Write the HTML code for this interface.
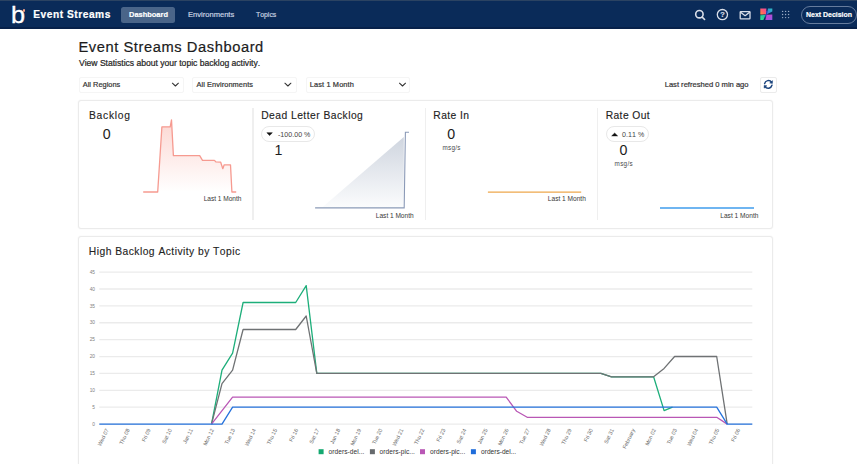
<!DOCTYPE html>
<html lang="en">
<head>
<meta charset="utf-8">
<title>Event Streams Dashboard</title>
<style>
*{box-sizing:border-box;margin:0;padding:0}
html,body{width:857px;height:464px;overflow:hidden;background:#fff}
body{position:relative;font-family:"Liberation Sans", sans-serif;color:#222}
.t{position:absolute;line-height:1;white-space:nowrap;font-kerning:none;font-weight:400;display:block;transform-origin:0 0;-webkit-text-stroke:0.2px currentColor}
.nav{position:absolute;left:0;top:0;width:857px;height:28.7px;background:#0a2b59;border-top:1px solid #2b4362;border-bottom:2px solid #07214a}
.thin{-webkit-text-stroke:0}
.hd{-webkit-text-stroke:0.12px currentColor}
.bd{-webkit-text-stroke:0.22px currentColor}
.logo{-webkit-text-stroke:0.35px #fff}
.pill-nav{position:absolute;left:121px;top:7px;width:54px;height:16px;border-radius:2.5px;background:#4a6589}
.btn-nd{position:absolute;left:800.5px;top:6px;width:56px;height:18px;border-radius:9px;border:1px solid #667c9d}
.dot{position:absolute;left:22.5px;top:9.2px;width:2.7px;height:2.7px;border-radius:50%;background:#f5a58a}
.sel{position:absolute;top:77px;height:16px;width:105px;border:1px solid #f5f5f5;border-radius:2px;background:#fff}
.card{position:absolute;left:78px;width:695.1px;border:1px solid #ebebeb;border-radius:3px;background:#fff;box-shadow:0 0 1.5px rgba(0,0,0,.07)}
.div{position:absolute;top:108px;width:1.3px;height:112.3px;background:#efefef}
.chip{position:absolute;top:126.1px;height:16.1px;border:1px solid #e8e8e8;border-radius:8px;background:#fff}
.rbtn{position:absolute;left:759.5px;top:76.6px;width:17px;height:16.2px;border:1px solid #ebebeb;border-radius:2px;background:#fff}
svg{position:absolute;left:0;top:0;overflow:visible}
.grid{stroke:#ebebeb;stroke-width:1.3}
.yl{font-size:4.8px;fill:#808080;text-anchor:end;font-family:"Liberation Sans", sans-serif}
.xl{font-size:5.4px;fill:#666;text-anchor:end;font-family:"Liberation Sans", sans-serif}
.ln{fill:none;stroke-width:1.3;stroke-linejoin:round}
</style>
</head>
<body>
<header>
<div class="nav"></div>
<nav>
<div class="pill-nav"></div>
<div class="btn-nd"></div>
<span class="t logo" style="left:10.77px;top:3px;font-size:24.5px;transform:scaleX(1.03);color:#fff;">b</span>
<span class="t" style="left:33.22px;top:10px;font-size:10.2px;letter-spacing:0.528px;font-weight:700;color:#fff;">Event Streams</span>
<span class="t" style="left:128.70px;top:11px;font-size:8.1px;transform:scaleX(0.9216);font-weight:700;color:#fff;">Dashboard</span>
<span class="t" style="left:187.98px;top:11px;font-size:8.1px;transform:scaleX(0.9348);color:#c9d3e2;">Environments</span>
<span class="t" style="left:256.45px;top:11px;font-size:8.1px;transform:scaleX(0.8511);color:#c9d3e2;">Topics</span>
<span class="t" style="left:805.53px;top:11px;font-size:8.1px;transform:scaleX(0.8606);font-weight:700;color:#fff;">Next Decision</span>
<i class="dot"></i>
<svg width="857" height="28" viewBox="0 0 857 28" aria-hidden="true">
 <g fill="none" stroke="#d9dee8" stroke-width="1.3" stroke-linecap="round" stroke-linejoin="round">
  <circle cx="699.4" cy="14.2" r="3.7" stroke-width="1.6"/><path d="M702.2 17.1 L704.6 19.5" stroke-width="1.6"/>
  <circle cx="722.4" cy="14.6" r="5.1"/>
  <rect x="740.2" y="11.6" width="9.8" height="7.2" rx="0.6"/><path d="M740.6 12.2 L745.1 15.7 L749.6 12.2"/>
 </g>
 <g fill="#9aabc6">
  <circle cx="782.6" cy="11.4" r="0.72"/><circle cx="785.6" cy="11.4" r="0.72"/><circle cx="788.6" cy="11.4" r="0.72"/>
  <circle cx="782.6" cy="14.5" r="0.72"/><circle cx="785.6" cy="14.5" r="0.72"/><circle cx="788.6" cy="14.5" r="0.72"/>
  <circle cx="782.6" cy="17.6" r="0.72"/><circle cx="785.6" cy="17.6" r="0.72"/><circle cx="788.6" cy="17.6" r="0.72"/>
 </g>
 <defs>
  <linearGradient id="i1" x1="1" y1="0" x2="0" y2="1"><stop offset="0" stop-color="#f0469c"/><stop offset=".55" stop-color="#ff5f6b"/><stop offset="1" stop-color="#ff9440"/></linearGradient>
  <linearGradient id="i2" x1="0" y1="1" x2="1" y2="0"><stop offset="0" stop-color="#3b6fe0"/><stop offset="1" stop-color="#2bc0c2"/></linearGradient>
  <linearGradient id="i3" x1="0" y1="1" x2="1" y2="0"><stop offset="0" stop-color="#36e48c"/><stop offset="1" stop-color="#22b9a8"/></linearGradient>
  <linearGradient id="i4" x1="0" y1="0" x2="1" y2="1"><stop offset="0" stop-color="#dc42c0"/><stop offset="1" stop-color="#8e58ea"/></linearGradient>
 </defs>
 <g>
  <path d="M765.4 11 L767.6 11 L767.3 17.6 L765.2 17.6Z" fill="#2a35b4"/>
  <path d="M760.3 8.6 L766.4 8.6 L766 14.3 L760.3 14.6Z" fill="url(#i1)"/>
  <path d="M768 8.6 L772.3 8.6 L772.3 11.6 L766.9 14.2Z" fill="url(#i2)"/>
  <path d="M760.3 15.2 L765.7 14.8 L763.4 20.1 L760.3 20.1Z" fill="url(#i3)"/>
  <path d="M766.7 14.8 L772.3 14.4 L772.3 20.1 L765.3 20.1Z" fill="url(#i4)"/>
 </g>
</svg>
<span class="t" style="left:720.3px;top:10.9px;font-size:7.4px;font-weight:700;color:#d9dee8">?</span>
</nav>
</header>
<main>

<h1 class="t" style="left:78.39px;top:40px;font-size:14.7px;letter-spacing:0.575px;color:#1c1c1c;">Event Streams Dashboard</h1>
<p class="t bd" style="left:78.96px;top:59px;font-size:8.6px;letter-spacing:-0.018px;color:#262626;">View Statistics about your topic backlog activity.</p>

<div class="filters">
<div class="sel" style="left:79.3px"></div>
<div class="sel" style="left:192px"></div>
<div class="sel" style="left:305.8px;width:104px"></div>
<div class="rbtn"></div>
<span class="t" style="left:82.79px;top:81px;font-size:7.4px;letter-spacing:0.005px;color:#333;">All Regions</span>
<span class="t" style="left:196.49px;top:81px;font-size:7.4px;letter-spacing:0.071px;color:#333;">All Environments</span>
<span class="t" style="left:309.69px;top:81px;font-size:7.4px;letter-spacing:0.137px;color:#333;">Last 1 Month</span>
<span class="t" style="left:664.68px;top:81px;font-size:7.6px;letter-spacing:-0.006px;color:#333;">Last refreshed 0 min ago</span>
<svg width="857" height="100" viewBox="0 0 857 100" aria-hidden="true">
 <g fill="none" stroke="#333" stroke-width="1.05" stroke-linecap="round" stroke-linejoin="round">
  <path d="M172.4 83.2 L175.4 86 L178.4 83.2"/>
  <path d="M284.9 83.2 L287.9 86 L290.9 83.2"/>
  <path d="M399.5 83.2 L402.5 86 L405.5 83.2"/>
 </g>
 <g fill="none" stroke="#1a437d" stroke-width="1.5" stroke-linecap="round">
  <path d="M764.6 83.6 A3.9 3.9 0 0 1 771.6 82.2"/>
  <path d="M772 85.2 A3.9 3.9 0 0 1 765 86.6"/>
 </g>
 <path d="M772.6 80.6 L772.4 83.6 L769.6 83Z" fill="#1a437d" stroke="#1a437d" stroke-width="0.4" stroke-linejoin="round"/>
 <path d="M764 88.2 L764.2 85.2 L767 85.8Z" fill="#1a437d" stroke="#1a437d" stroke-width="0.4" stroke-linejoin="round"/>
</svg>

</div>
<section>
<div class="card" style="top:100px;height:129.2px"></div>
<div class="div" style="left:252.4px"></div>
<div class="div" style="left:425px"></div>
<div class="div" style="left:597.2px"></div>
<div class="chip" style="left:261px;width:54.2px"></div>
<div class="chip" style="left:606.1px;width:42.8px"></div>
<svg width="857" height="230" viewBox="0 0 857 230" aria-hidden="true">
 <defs>
  <linearGradient id="g1" x1="0" y1="0" x2="0" y2="1"><stop offset="0" stop-color="#fcd7d2"/><stop offset="1" stop-color="#fff"/></linearGradient>
  <linearGradient id="g2" x1="0" y1="0" x2="0" y2="1"><stop offset="0" stop-color="#cfd5df"/><stop offset="1" stop-color="#fbfcfd"/></linearGradient>
 </defs>
 <path d="M143.2,192.0 L157.7,192.0 L161.9,126.8 L170.2,126.8 L171.5,119.9 L173.4,155.6 L199.7,155.6 L202.5,160.3 L214.4,160.4 L215.8,161.8 L220.7,162.2 L222.8,168.7 L224.2,164.8 L230.5,164.8 L231.9,192.0 L236.2,192.0 Z" fill="url(#g1)"/>
 <path d="M143.2,192.0 L157.7,192.0 L161.9,126.8 L170.2,126.8 L171.5,119.9 L173.4,155.6 L199.7,155.6 L202.5,160.3 L214.4,160.4 L215.8,161.8 L220.7,162.2 L222.8,168.7 L224.2,164.8 L230.5,164.8 L231.9,192.0 L236.2,192.0" fill="none" stroke="#f69a90" stroke-width="1.3" stroke-linejoin="round"/>
 <path d="M321.5,207.9 L403.8,207.9 L403.8,137 Z" fill="url(#g2)"/>
 <path d="M315.1,207.9 L404.2,207.9 L405.4,132.2 L409.0,132.2" fill="none" stroke="#8b9ab7" stroke-width="1.1"/>
 <path d="M487.9,192.1 L581.2,192.1" stroke="#eea74c" stroke-width="1.3"/>
 <path d="M660,208 L754,208" stroke="#3f9dec" stroke-width="1.3"/>
 <path d="M266.9 132.7 L272.3 132.7 L269.6 135.6Z" fill="#111" stroke="#111" stroke-width="0.5" stroke-linejoin="round"/>
 <path d="M611.7 135.9 L617.6 135.9 L614.65 133.1Z" fill="#111" stroke="#111" stroke-width="0.5" stroke-linejoin="round"/>
</svg>
<h2 class="t hd" style="left:88.96px;top:111px;font-size:10.3px;letter-spacing:0.728px;color:#222;">Backlog</h2>
<div class="t thin" style="left:102.85px;top:127px;font-size:14.2px;color:#1c1c1c;">0</div>
<span class="t thin" style="left:203.66px;top:196px;font-size:6.6px;letter-spacing:-0.035px;color:#383838;">Last 1 Month</span>
<h2 class="t hd" style="left:261.16px;top:111px;font-size:10.3px;letter-spacing:0.466px;color:#222;">Dead Letter Backlog</h2>
<span class="t thin" style="left:277.88px;top:132px;font-size:7.1px;letter-spacing:0.025px;color:#444;">-100.00 %</span>
<div class="t thin" style="left:274.52px;top:143px;font-size:14.2px;color:#1c1c1c;">1</div>
<span class="t thin" style="left:375.86px;top:213px;font-size:6.6px;letter-spacing:-0.035px;color:#383838;">Last 1 Month</span>
<h2 class="t hd" style="left:433.36px;top:111px;font-size:10.3px;letter-spacing:0.401px;color:#222;">Rate In</h2>
<div class="t thin" style="left:447.25px;top:127px;font-size:14.2px;color:#1c1c1c;">0</div>
<span class="t thin" style="left:442.38px;top:145px;font-size:6.3px;letter-spacing:0.311px;color:#4a4a4a;">msg/s</span>
<span class="t thin" style="left:547.86px;top:196px;font-size:6.6px;letter-spacing:-0.017px;color:#383838;">Last 1 Month</span>
<h2 class="t hd" style="left:605.66px;top:111px;font-size:10.3px;letter-spacing:0.400px;color:#222;">Rate Out</h2>
<span class="t thin" style="left:622.02px;top:132px;font-size:7.1px;letter-spacing:0.025px;color:#444;">0.11 %</span>
<div class="t thin" style="left:619.45px;top:143px;font-size:14.2px;color:#1c1c1c;">0</div>
<span class="t thin" style="left:614.58px;top:161px;font-size:6.3px;letter-spacing:0.311px;color:#4a4a4a;">msg/s</span>
<span class="t thin" style="left:720.26px;top:213px;font-size:6.6px;letter-spacing:0.010px;color:#383838;">Last 1 Month</span>

</section>
<section>
<div class="card" style="top:235.5px;height:240px"></div>
<h2 class="t hd" style="left:88.86px;top:247px;font-size:10.3px;letter-spacing:0.461px;color:#222;">High Backlog Activity by Topic</h2>
<svg width="857" height="464" viewBox="0 0 857 464">
<line x1="99.3" x2="752.3" y1="424.10" y2="424.10" class="grid"/>
<line x1="99.3" x2="752.3" y1="407.21" y2="407.21" class="grid"/>
<line x1="99.3" x2="752.3" y1="390.32" y2="390.32" class="grid"/>
<line x1="99.3" x2="752.3" y1="373.43" y2="373.43" class="grid"/>
<line x1="99.3" x2="752.3" y1="356.54" y2="356.54" class="grid"/>
<line x1="99.3" x2="752.3" y1="339.65" y2="339.65" class="grid"/>
<line x1="99.3" x2="752.3" y1="322.76" y2="322.76" class="grid"/>
<line x1="99.3" x2="752.3" y1="305.87" y2="305.87" class="grid"/>
<line x1="99.3" x2="752.3" y1="288.98" y2="288.98" class="grid"/>
<line x1="99.3" x2="752.3" y1="272.09" y2="272.09" class="grid"/>
<text x="95" y="425.80" class="yl">0</text>
<text x="95" y="408.91" class="yl">5</text>
<text x="95" y="392.02" class="yl">10</text>
<text x="95" y="375.13" class="yl">15</text>
<text x="95" y="358.24" class="yl">20</text>
<text x="95" y="341.35" class="yl">25</text>
<text x="95" y="324.46" class="yl">30</text>
<text x="95" y="307.57" class="yl">35</text>
<text x="95" y="290.68" class="yl">40</text>
<text x="95" y="273.79" class="yl">45</text>
<text x="108.85" y="429.9" transform="rotate(-64 108.85 429.9)" class="xl">Wed 07</text>
<text x="129.90" y="429.9" transform="rotate(-64 129.90 429.9)" class="xl">Thu 08</text>
<text x="150.95" y="429.9" transform="rotate(-64 150.95 429.9)" class="xl">Fri 09</text>
<text x="172.00" y="429.9" transform="rotate(-64 172.00 429.9)" class="xl">Sat 10</text>
<text x="193.05" y="429.9" transform="rotate(-64 193.05 429.9)" class="xl">Jan 11</text>
<text x="214.10" y="429.9" transform="rotate(-64 214.10 429.9)" class="xl">Mon 12</text>
<text x="235.15" y="429.9" transform="rotate(-64 235.15 429.9)" class="xl">Tue 13</text>
<text x="256.20" y="429.9" transform="rotate(-64 256.20 429.9)" class="xl">Wed 14</text>
<text x="277.25" y="429.9" transform="rotate(-64 277.25 429.9)" class="xl">Thu 15</text>
<text x="298.30" y="429.9" transform="rotate(-64 298.30 429.9)" class="xl">Fri 16</text>
<text x="319.35" y="429.9" transform="rotate(-64 319.35 429.9)" class="xl">Sat 17</text>
<text x="340.40" y="429.9" transform="rotate(-64 340.40 429.9)" class="xl">Jan 18</text>
<text x="361.45" y="429.9" transform="rotate(-64 361.45 429.9)" class="xl">Mon 19</text>
<text x="382.50" y="429.9" transform="rotate(-64 382.50 429.9)" class="xl">Tue 20</text>
<text x="403.55" y="429.9" transform="rotate(-64 403.55 429.9)" class="xl">Wed 21</text>
<text x="424.60" y="429.9" transform="rotate(-64 424.60 429.9)" class="xl">Thu 22</text>
<text x="445.65" y="429.9" transform="rotate(-64 445.65 429.9)" class="xl">Fri 23</text>
<text x="466.70" y="429.9" transform="rotate(-64 466.70 429.9)" class="xl">Sat 24</text>
<text x="487.75" y="429.9" transform="rotate(-64 487.75 429.9)" class="xl">Jan 25</text>
<text x="508.80" y="429.9" transform="rotate(-64 508.80 429.9)" class="xl">Mon 26</text>
<text x="529.85" y="429.9" transform="rotate(-64 529.85 429.9)" class="xl">Tue 27</text>
<text x="550.90" y="429.9" transform="rotate(-64 550.90 429.9)" class="xl">Wed 28</text>
<text x="571.95" y="429.9" transform="rotate(-64 571.95 429.9)" class="xl">Thu 29</text>
<text x="593.00" y="429.9" transform="rotate(-64 593.00 429.9)" class="xl">Fri 30</text>
<text x="614.05" y="429.9" transform="rotate(-64 614.05 429.9)" class="xl">Sat 31</text>
<text x="635.10" y="429.9" transform="rotate(-64 635.10 429.9)" class="xl">February</text>
<text x="656.15" y="429.9" transform="rotate(-64 656.15 429.9)" class="xl">Mon 02</text>
<text x="677.20" y="429.9" transform="rotate(-64 677.20 429.9)" class="xl">Tue 03</text>
<text x="698.25" y="429.9" transform="rotate(-64 698.25 429.9)" class="xl">Wed 04</text>
<text x="719.30" y="429.9" transform="rotate(-64 719.30 429.9)" class="xl">Thu 05</text>
<text x="740.35" y="429.9" transform="rotate(-64 740.35 429.9)" class="xl">Fri 06</text>
<path d="M211.5,424.1 L222.0,370.1 L232.6,353.2 L243.1,302.5 L295.7,302.5 L306.2,285.6 L316.8,373.4 L600.9,373.4 L611.5,376.8 L653.6,376.8 L664.1,410.6 L672.5,407.2" class="ln" stroke="#1dae7a"/>
<path d="M211.5,424.1 L222.0,383.6 L232.6,370.1 L243.1,329.5 L295.7,329.5 L306.2,316.0 L316.8,373.4 L600.9,373.4 L611.5,376.8 L653.6,376.8 L664.1,368.4 L674.6,356.5 L716.7,356.5 L727.2,424.1" class="ln" stroke="#6f7274"/>
<path d="M211.5,424.1 L232.6,397.1 L506.2,397.1 L516.7,411.3 L527.2,417.3 L716.7,417.3 L727.2,424.1" class="ln" stroke="#b957b5"/>
<path d="M99.3,424.1 L222.0,424.1 L232.6,407.2 L716.7,407.2 L727.2,424.1 L752.3,424.1" class="ln" stroke="#2572dc" stroke-width="1.45"/>
<rect x="318.6" y="449.2" width="5" height="5" fill="#14a870"/>
<rect x="369.9" y="449.2" width="5" height="5" fill="#666a6d"/>
<rect x="420" y="449.2" width="5" height="5" fill="#b957b5"/>
<rect x="470.9" y="449.2" width="5" height="5" fill="#1f6ddb"/>
</svg>
<span class="t thin" style="left:328.62px;top:449px;font-size:6.6px;letter-spacing:0.047px;color:#333;">orders-del...</span>
<span class="t thin" style="left:379.62px;top:449px;font-size:6.6px;letter-spacing:0.036px;color:#333;">orders-pic...</span>
<span class="t thin" style="left:430.02px;top:449px;font-size:6.6px;letter-spacing:0.036px;color:#333;">orders-pic...</span>
<span class="t thin" style="left:481.02px;top:449px;font-size:6.6px;color:#333;">orders-del...</span>
</section>
</main>
</body>
</html>
